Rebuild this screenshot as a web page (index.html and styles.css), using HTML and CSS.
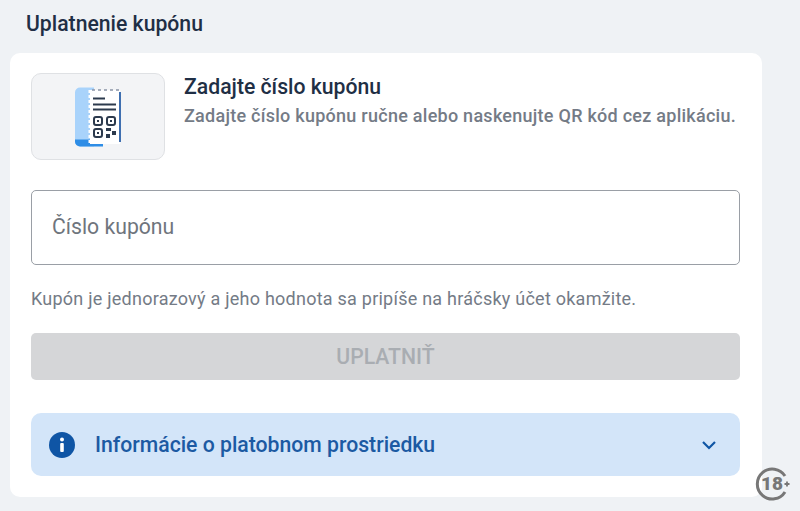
FILE: index.html
```html
<!DOCTYPE html>
<html lang="sk">
<head>
    <meta charset="UTF-8">
    <meta name="viewport" content="width=device-width, initial-scale=1.0">
    <title>Uplatnenie kupónu</title>
    <link rel="stylesheet" href="styles.css">
</head>
<body>
    <h1 class="page-title">Uplatnenie kupónu</h1>

    <div class="card">
        <div class="intro">
            <div class="intro-icon">
                <svg width="48" height="62" viewBox="0 0 48 62">
                    <path d="M6 1.500h14v59H6a5 5 0 0 1-5-5v-49a5 5 0 0 1 5-5z" fill="#a9d3fb"/>
                    <path d="M1 53.500h28v7H6a5 5 0 0 1-5-5z" fill="#2e8de6"/>
                    <rect x="16" y="4" width="30" height="54" fill="#fff"/>
                    <path d="M16 4v54" stroke="#fff" stroke-width="3" stroke-dasharray="3 2"/>
                    <path d="M46 6v50" stroke="#3f6fb0" stroke-width="2"/>
                    <path d="M18 4h27" stroke="#8a94a6" stroke-width="1.500" stroke-dasharray="3 3"/>
                    <path d="M19 12.500h12M19 18.500h23M19 23.500h23" stroke="#2c3a4d" stroke-width="2"/>
                    <g fill="none" stroke="#2c3a4d" stroke-width="2">
                        <rect x="20" y="31" width="8" height="8" rx="2"/>
                        <rect x="33" y="31" width="8" height="8" rx="2"/>
                        <rect x="20" y="43" width="8" height="8" rx="2"/>
                    </g>
                    <path d="M23 34h2v2h-2zM36 34h2v2h-2zM23 46h2v2h-2zM32 42h5v3h-5zM38 45h4v4h-4zM32 48h4v4h-4z" fill="#2c3a4d"/>
                </svg>
            </div>
            <div class="intro-text">
                <h2>Zadajte číslo kupónu</h2>
                <p>Zadajte číslo kupónu ručne alebo naskenujte QR kód cez aplikáciu.</p>
            </div>
        </div>

        <input class="coupon-input" type="text" placeholder="Číslo kupónu">

        <p class="hint">Kupón je jednorazový a jeho hodnota sa pripíše na hráčsky účet okamžite.</p>

        <button class="submit" disabled>UPLATNIŤ</button>

        <div class="info">
            <svg class="info-icon" width="26" height="26" viewBox="0 0 26 26">
                <circle cx="13" cy="13" r="13" fill="#0f55a5"/>
                <circle cx="13" cy="7.500" r="2" fill="#fff"/>
                <rect x="11.200" y="11" width="3.600" height="9" rx="1" fill="#fff"/>
            </svg>
            <span class="info-label">Informácie o platobnom prostriedku</span>
            <svg class="chevron" width="16" height="10" viewBox="0 0 16 10">
                <path d="M2 2l6 6 6-6" fill="none" stroke="#0f55a5" stroke-width="2.200"/>
            </svg>
        </div>
    </div>

    <div class="age-badge">
        <svg width="36" height="36" viewBox="0 0 36 36">
            <path d="M30 10a15 15 0 1 0 0 16" fill="none" stroke="#777" stroke-width="3"/>
            <path d="M32 15.500v5M29.500 18h5" stroke="#777" stroke-width="1.800"/>
        </svg>
        <span>18</span>
    </div>
</body>
</html>
```

FILE: styles.css
```css
body {
    margin: 0;
    height: 511px;
    overflow: hidden;
    background: #eff2f5;
    font-family: Roboto, Arial, sans-serif;
    position: relative;
}
.page-title {
    margin: 0;
    padding: 12px 0 0 26px;
    height: 40px;
    box-sizing: border-box;
    font-size: 21.200px;
    line-height: 24px;
    font-weight: 500;
    color: #1f2f45;
}
.card {
    margin: 13px 38px 0 10px;
    height: 444px;
    box-sizing: border-box;
    padding: 20px 22px 0 21px;
    background: #fff;
    border-radius: 10px;
}
.intro {
    display: flex;
    gap: 19px;
}
.intro-icon {
    width: 134px;
    height: 87px;
    box-sizing: border-box;
    display: flex;
    align-items: center;
    justify-content: center;
    background: #f3f4f6;
    border: 1px solid #dfe1e4;
    border-radius: 10px;
}
.intro-text h2 {
    margin: 2px 0 0;
    font-size: 21.200px;
    line-height: 24px;
    font-weight: 500;
    color: #1f2f45;
}
.intro-text p {
    margin: 6px 0 0;
    font-size: 18px;
    line-height: 22px;
    font-weight: 500;
    letter-spacing: 0.260px;
    color: #747b86;
}
.coupon-input {
    display: block;
    width: 100%;
    height: 75px;
    margin-top: 30px;
    padding: 0 20px 2px;
    box-sizing: border-box;
    border: 1px solid #9a9fa6;
    border-radius: 5px;
    font-family: inherit;
    font-size: 21.200px;
}
.coupon-input::placeholder {
    color: #6f757d;
    opacity: 1;
}
.hint {
    margin: 23px 0 0;
    font-size: 18px;
    line-height: 22px;
    letter-spacing: 0.240px;
    color: #747b86;
}
.submit {
    display: block;
    width: 100%;
    height: 47px;
    margin-top: 23px;
    border: none;
    border-radius: 5px;
    background: #d5d6d8;
    color: #a9adb2;
    font-family: inherit;
    font-size: 21.200px;
    font-weight: 500;
}
.info {
    display: flex;
    align-items: center;
    height: 63px;
    margin-top: 33px;
    padding: 0 23px 0 18px;
    background: #d3e5f9;
    border-radius: 10px;
}
.info-label {
    flex: 1;
    margin-left: 20px;
    font-size: 21.200px;
    font-weight: 500;
    color: #1c5aa3;
}
.age-badge {
    position: absolute;
    left: 755px;
    top: 466px;
    width: 36px;
    height: 36px;
    color: #777;
    font-size: 19px;
    font-weight: 900;
    line-height: 36px;
    text-align: center;
}
.age-badge svg {
    position: absolute;
    left: 0;
    top: 0;
}
.age-badge span {
    position: relative;
    left: -1px;
}
```
